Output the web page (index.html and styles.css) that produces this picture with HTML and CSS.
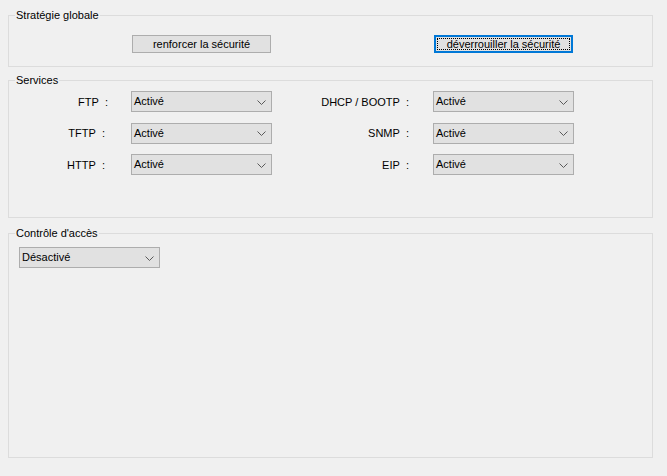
FILE: index.html
```html
<!DOCTYPE html>
<html lang="fr">
<head>
<meta charset="utf-8">
<title>Sécurité</title>
<link rel="stylesheet" href="styles.css">
</head>
<body>
<fieldset class="group group-strategy">
  <legend class="group-title">Stratégie globale</legend>
  <div class="btn-row">
    <button class="btn" type="button">renforcer la sécurité</button>
    <button class="btn btn-focus" type="button"><span class="focus-rect">déverrouiller la sécurité</span></button>
  </div>
</fieldset>

<fieldset class="group group-services">
  <legend class="group-title">Services</legend>
  <div class="svc-grid">
    <div class="svc-label svc-label-left svc-label-ftp">FTP&nbsp;&nbsp;:</div>
    <div class="combo"><span class="combo-text">Activé</span><svg class="chev" width="9" height="5" viewBox="0 0 9 5"><path d="M0.5 0.5 L4.5 4.5 L8.5 0.5" fill="none" stroke="#5a5a5a" stroke-width="1"/></svg></div>
    <div class="svc-label svc-label-right">DHCP / BOOTP&nbsp; :</div>
    <div class="combo"><span class="combo-text">Activé</span><svg class="chev" width="9" height="5" viewBox="0 0 9 5"><path d="M0.5 0.5 L4.5 4.5 L8.5 0.5" fill="none" stroke="#5a5a5a" stroke-width="1"/></svg></div>

    <div class="svc-label svc-label-left">TFTP&nbsp;&nbsp;:</div>
    <div class="combo"><span class="combo-text">Activé</span><svg class="chev" width="9" height="5" viewBox="0 0 9 5"><path d="M0.5 0.5 L4.5 4.5 L8.5 0.5" fill="none" stroke="#5a5a5a" stroke-width="1"/></svg></div>
    <div class="svc-label svc-label-right">SNMP&nbsp;&nbsp;:</div>
    <div class="combo"><span class="combo-text">Activé</span><svg class="chev" width="9" height="5" viewBox="0 0 9 5"><path d="M0.5 0.5 L4.5 4.5 L8.5 0.5" fill="none" stroke="#5a5a5a" stroke-width="1"/></svg></div>

    <div class="svc-label svc-label-left">HTTP&nbsp;&nbsp;:</div>
    <div class="combo"><span class="combo-text">Activé</span><svg class="chev" width="9" height="5" viewBox="0 0 9 5"><path d="M0.5 0.5 L4.5 4.5 L8.5 0.5" fill="none" stroke="#5a5a5a" stroke-width="1"/></svg></div>
    <div class="svc-label svc-label-right">EIP&nbsp;&nbsp;:</div>
    <div class="combo"><span class="combo-text">Activé</span><svg class="chev" width="9" height="5" viewBox="0 0 9 5"><path d="M0.5 0.5 L4.5 4.5 L8.5 0.5" fill="none" stroke="#5a5a5a" stroke-width="1"/></svg></div>
  </div>
</fieldset>

<fieldset class="group group-access">
  <legend class="group-title">Contrôle d'accès</legend>
  <div class="combo combo-access"><span class="combo-text">Désactivé</span><svg class="chev" width="9" height="5" viewBox="0 0 9 5"><path d="M0.5 0.5 L4.5 4.5 L8.5 0.5" fill="none" stroke="#5a5a5a" stroke-width="1"/></svg></div>
</fieldset>
</body>
</html>
```

FILE: styles.css
```css
* { box-sizing: border-box; }

html, body {
  margin: 0;
  height: 476px;
  overflow: hidden;
}

body {
  background: #f0f0f0;
  padding: 9px 14px 0 8px;
  font-family: "Liberation Sans", Arial, sans-serif;
  font-size: 11px;
  color: #000;
  display: flex;
  flex-direction: column;
}

.group {
  margin: 0;
  padding: 0;
  min-inline-size: 0;
  border: 1px solid #dcdcdc;
}

.group-title {
  margin-left: 6px;
  padding: 0 1px;
  line-height: 13px;
  height: 13px;
}

/* Stratégie globale */
.group-strategy {
  padding: 13px 0 13px 0;
}

.btn-row {
  display: flex;
  padding-left: 123px;
  gap: 163px;
}

.btn {
  width: 139px;
  height: 18px;
  margin: 0;
  padding: 0;
  font-family: inherit;
  font-size: 11px;
  line-height: 16px;
  color: #000;
  background: #e1e1e1;
  border: 1px solid #adadad;
  border-radius: 0;
  display: flex;
  align-items: center;
  justify-content: center;
}

.btn-focus {
  border: 2px solid #0078d7;
  padding: 1px;
}

.focus-rect {
  flex: 1;
  align-self: stretch;
  display: flex;
  align-items: center;
  justify-content: center;
  border: 1px dotted #000;
  line-height: 10px;
  color: #000;
}

/* Services */
.group-services {
  margin-top: 7px;
  padding: 4px 0 42px 0;
}

.svc-grid {
  display: grid;
  grid-template-columns: 122px 141px 161px 141px;
  grid-auto-rows: 21px;
  row-gap: 10.5px;
}

.svc-label {
  display: flex;
  align-items: center;
  justify-content: flex-end;
  white-space: nowrap;
}

.svc-label-left { padding-right: 26px; }
.svc-label-ftp { padding-right: 23px; }
.svc-label-right { padding-right: 24px; }

.combo {
  height: 21px;
  width: 141px;
  background: #e1e1e1;
  border: 1px solid #adadad;
  display: flex;
  align-items: center;
  justify-content: space-between;
  padding: 0 5px 0 2px;
}

.combo-text {
  line-height: 13px;
}

.chev {
  display: block;
  margin-top: 1px;
}

/* Contrôle d'accès */
.group-access {
  margin-top: 9px;
  padding: 7px 0 189px 0;
}

.combo-access {
  margin-left: 10px;
}
```
